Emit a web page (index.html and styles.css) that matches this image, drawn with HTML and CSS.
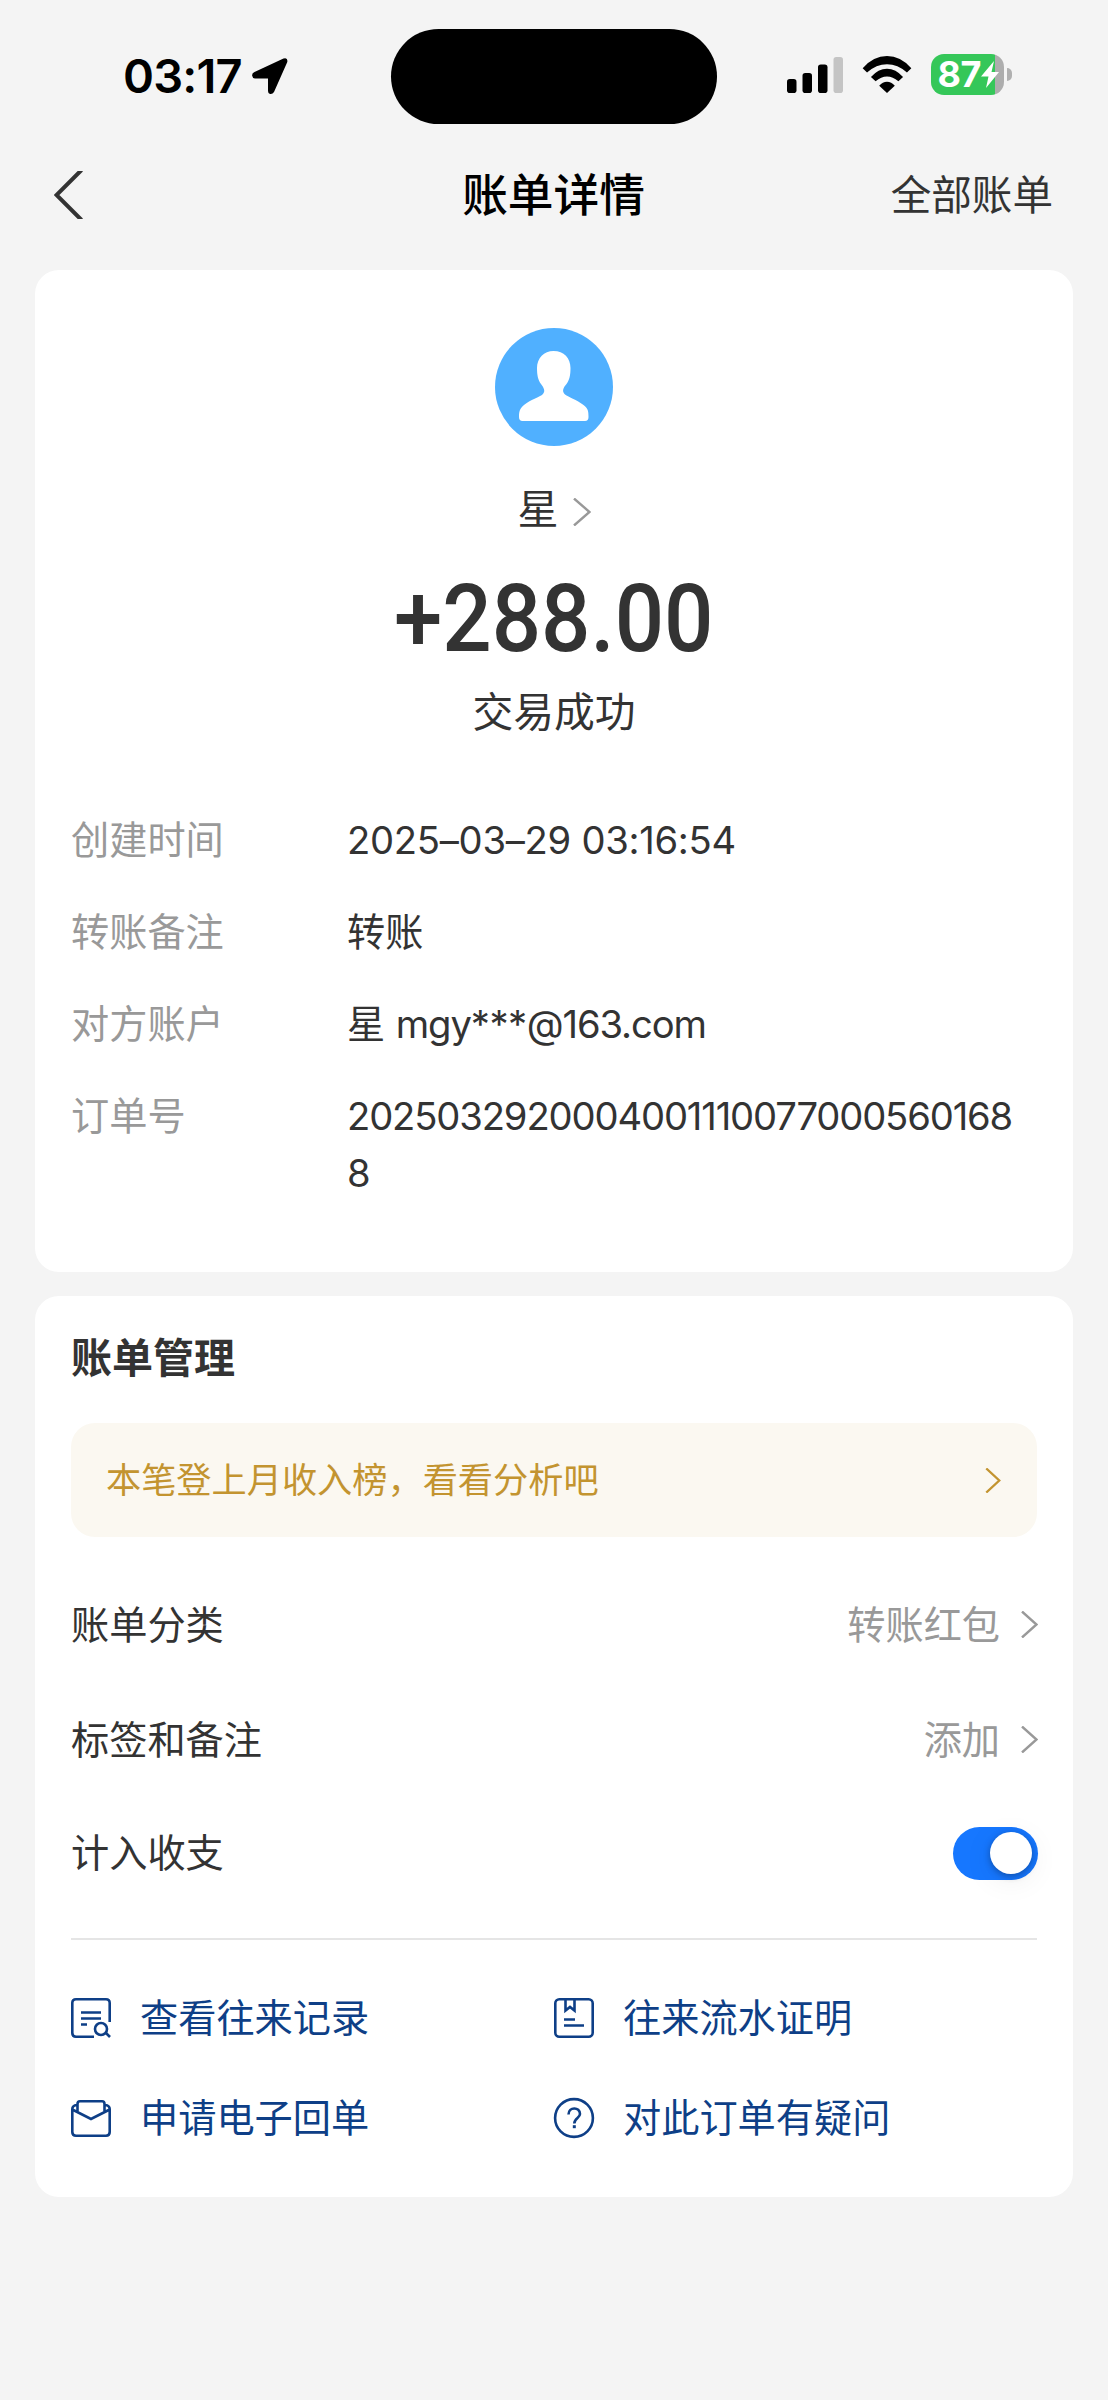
FILE: index.html
```html
<!DOCTYPE html>
<html lang="zh-CN">
<head>
<meta charset="utf-8">
<title>账单详情</title>
<link rel="stylesheet" href="styles.css">
</head>
<body>
<header class="status">
  <div class="status-left">
    <span class="clock">03:17</span>
    <svg class="locate" viewBox="0 0 36 36"><path d="M31.5 .5Q36 -1 35.3 4L22 34Q20.500 36.500 18 36Q16 35.500 16 33V20.500H3Q.3 20 .1 17.500Q0 15 2.500 14Z"/></svg>
  </div>
  <div class="island"></div>
  <div class="status-right">
    <svg class="signal" viewBox="0 0 57 36"><rect x="0" y="22" width="9.500" height="14" rx="2.800"/><rect x="15.500" y="16" width="9.500" height="20" rx="2.800"/><rect x="31" y="7.500" width="9.500" height="28.500" rx="2.800"/><rect class="dim" x="46.500" y="0" width="9.500" height="36" rx="2.800"/></svg>
    <svg class="wifi" viewBox="0 0 50 38"><path d="M0 12.500Q11 0 25 0T50 12.500L45.500 17Q36 8.500 25 8.500T4.500 17Z"/><path d="M8.500 21.500Q16 13 25 13T41.500 21.500L36.700 26Q31 21 25 21T13.300 26Z"/><path d="M17 30.500Q20.500 26.500 25 26.500T33 30.500L25 38Z"/></svg>
    <div class="battery">
      <div class="battery-body"><span class="battery-text">87</span><svg class="bolt" viewBox="0 0 18 27"><path d="M13 0L0 15.500H7.500L5 27L18 11H10.500Z"/></svg></div>
      <div class="battery-nub"></div>
    </div>
  </div>
</header>

<nav class="nav">
  <svg class="back" viewBox="0 0 30 48"><path d="M27.500 -1L2.500 24L27.500 49"/></svg>
  <h1 class="nav-title">账单详情</h1>
  <a class="nav-link">全部账单</a>
</nav>

<main class="content">
  <section class="card summary">
    <svg class="avatar" viewBox="0 0 118 118"><circle class="avatar-bg" cx="59" cy="59" r="59"/><path class="avatar-fg" d="M58.500 23C69 23 75.500 30 75.500 40C75.500 47 74.500 52 71.500 56C68 60 67 63 69.500 66C73 69 82 72 88.500 77C93 80.500 93.500 83 93.500 89Q93.500 93 90 93H27.500Q24 93 24 89C24 83 25 80.500 29 77C35 72 45 69 48 66C50.500 63 49 60 46 56C43 52 42 47 42 40C42 30 49 23 58.500 23Z"/></svg>
    <div class="payer"><span>星</span><svg class="chev payer-chev" viewBox="0 0 18 28"><path d="M1 .5L16.500 14L1 27.500"/></svg></div>
    <div class="amount">+288.00</div>
    <div class="state">交易成功</div>
    <dl class="details">
      <dt>创建时间</dt><dd class="date">2025–03–29 03:16:54</dd>
      <dt>转账备注</dt><dd>转账</dd>
      <dt>对方账户</dt><dd class="account">星 mgy<span class="mask">***</span>@163.com</dd>
      <dt>订单号</dt><dd class="order">20250329200040011100770005601688</dd>
    </dl>
  </section>

  <section class="card manage">
    <h2 class="manage-title">账单管理</h2>
    <a class="banner"><span>本笔登上月收入榜，看看分析吧</span><svg class="chev banner-chev" viewBox="0 0 16 26"><path d="M1 .5L14.500 13L1 25.500"/></svg></a>
    <div class="row"><span>账单分类</span><span class="row-value">转账红包<svg class="chev" viewBox="0 0 17 27"><path d="M1 .5L15.500 13.500L1 26.500"/></svg></span></div>
    <div class="row"><span>标签和备注</span><span class="row-value">添加<svg class="chev" viewBox="0 0 17 27"><path d="M1 .5L15.500 13.500L1 26.500"/></svg></span></div>
    <div class="row row-toggle"><span>计入收支</span><span class="toggle"><span class="knob"></span></span></div>
    <div class="links">
      <a class="link"><svg class="icon" viewBox="0 0 40 40"><path d="M38.700 24V5Q38.700 1.300 35 1.300H5Q1.300 1.300 1.300 5V35Q1.300 38.700 5 38.700H23M10 14.500H30M10 20.500H30M10 26.500H16"/><circle cx="30" cy="31" r="6"/><path d="M34.500 34.500L39 39"/></svg><span>查看往来记录</span></a>
      <a class="link"><svg class="icon" viewBox="0 0 40 40"><rect x="1.300" y="1.300" width="37.400" height="37.400" rx="4"/><path d="M11.500 1.500V12.500L16 9L20.500 12.500V1.500M10 21.500H21M10 27.500H30"/></svg><span>往来流水证明</span></a>
      <a class="link"><svg class="icon" viewBox="0 0 40 40"><path d="M6.500 14.500V6Q6.500 3.300 9 3.300H31Q33.500 3.300 33.500 6V14.500M6 7Q1.300 7.500 1.300 11V34Q1.300 37.700 5 37.700H35Q38.700 37.700 38.700 34V11Q38.700 7.500 34 7M1.300 11.500L20 21L38.700 11.500"/></svg><span>申请电子回单</span></a>
      <a class="link"><svg class="icon" viewBox="0 0 40 40"><circle cx="20" cy="20" r="18.900"/><path d="M14.500 16.500C14.500 8.500 26 8.500 26 16C26 20 20.300 20 20.300 25.500"/><path class="dot" d="M18.800 27.200h3v3h-3Z"/></svg><span>对此订单有疑问</span></a>
    </div>
  </section>
</main>
</body>
</html>
```
FILE: styles.css
```css
* { box-sizing: border-box; }
body {
  margin: 0;
  min-height: 2400px;
  background: #f4f4f4;
  color: #333;
  font-family: Inter, "Noto Sans CJK SC", sans-serif;
  font-size: 38.2px;
  line-height: 56px;
}
svg { display: block; flex: none; overflow: visible; }

.status { display: grid; grid-template-columns: 391px 326px 1fr; align-items: center; height: 152px; color: #000; }
.status-left { display: flex; align-items: center; gap: 10px; padding: 0 0 1px 123px; }
.clock { font-size: 47px; font-weight: 600; letter-spacing: -.8px; width: 119px; white-space: nowrap; }
.locate { width: 36px; height: 36px; }
.island { height: 95px; border-radius: 48px; background: #000; }
.status-right { display: flex; align-items: center; padding: 0 0 3px 69.500px; }
.signal { width: 57px; height: 36px; }
.signal .dim { fill: #c4c4c4; }
.wifi { width: 50px; height: 37px; margin-left: 18px; }
.battery { display: flex; align-items: center; gap: 3px; margin-left: 19px; }
.battery-body { display: flex; align-items: center; width: 73px; height: 41px; padding-left: 7px; border-radius: 13px; background: linear-gradient(90deg, #35c759 64px, #adadad 64px); }
.battery-text { width: 43px; color: #fff; font-size: 36px; font-weight: 700; line-height: 41px; letter-spacing: -.5px; }
.bolt { width: 18px; height: 27px; fill: #fff; }
.battery-nub { width: 5px; height: 13px; border-radius: 0 5px 5px 0; background: #b0b0b0; }

.nav { display: grid; grid-template-columns: 1fr auto 1fr; align-items: center; height: 86px; padding: 0 55px 0 54px; }
.back { width: 30px; height: 48px; overflow: hidden; fill: none; stroke: #333; stroke-width: 4; }
.nav-title { margin: 0; padding-top: 2px; color: #000; font-size: 45.700px; font-weight: 500; }
.nav-link { justify-self: end; padding-top: 1px; font-size: 40.600px; }

.content { display: flex; flex-direction: column; gap: 24px; padding: 32px 35px 0; }
.card { border-radius: 24px; background: #fff; }
.summary { display: flex; flex-direction: column; align-items: center; height: 1002px; padding: 58px 36px 0; }
.avatar { width: 118px; height: 118px; }
.avatar-bg { fill: #50b0ff; }
.avatar-fg { fill: #fff; }
.payer { display: flex; align-items: center; gap: 14px; margin-top: 35px; font-size: 41px; }
.chev { width: 17px; height: 27px; overflow: hidden; fill: none; stroke: #999; stroke-width: 2.400; }
.payer-chev { width: 18px; height: 28px; margin-top: 6px; }
.amount { margin-top: 32px; font-family: Roboto, sans-serif; font-size: 94px; font-weight: 500; line-height: 100px; letter-spacing: 0; transform: scaleX(.925); }
.state { margin-top: 15px; font-size: 40.800px; }
.details { align-self: stretch; display: grid; grid-template-columns: 276px 1fr; row-gap: 35px; margin: 72px 0 0; line-height: 57px; }
.details dt { color: #999; }
.details dd { margin: 0; padding-right: 16px; overflow-wrap: anywhere; }
.details .date { letter-spacing: -.28px; }
.details .account { letter-spacing: -1.100px; word-spacing: 2px; }
.mask { letter-spacing: -.5px; }
.details .order { letter-spacing: -1.140px; }

.manage { height: 901px; padding: 0 36px; }
.manage-title { margin: 0; padding-top: 34px; font-size: 41px; font-weight: 700; }
.banner { display: flex; align-items: center; justify-content: space-between; height: 114px; margin: 37px 0 30px; padding: 0 36px 0 35px; border-radius: 24px; background: #fbf8f1; color: #c39430; font-size: 35.200px; }
.banner-chev { width: 16px; height: 25px; stroke: #c39430; }
.row { display: flex; align-items: center; justify-content: space-between; height: 115px; }
.row-value { display: flex; align-items: center; gap: 21px; margin-right: -1px; color: #999; }
.toggle { display: flex; align-items: center; justify-content: flex-end; width: 85px; height: 53px; margin-right: -1px; padding: 6px; border-radius: 27px; background: #1677ff; }
.knob { width: 42px; height: 42px; border-radius: 50%; background: #fff; box-shadow: 0 2px 7px rgba(0, 0, 0, .3), 0 6px 30px rgba(0, 0, 0, .08); }
.row-toggle { height: 143px; padding-bottom: 29px; border-bottom: 2px solid #e5e5e5; }
.links { display: grid; grid-template-columns: 1fr 1fr; row-gap: 44px; padding-top: 50px; color: #0e3f87; }
.link { display: flex; align-items: center; gap: 29px; }
.icon { width: 40px; height: 40px; fill: none; stroke: #0e3f87; stroke-width: 2.600; }
.icon .dot { fill: #0e3f87; stroke: none; }
```
